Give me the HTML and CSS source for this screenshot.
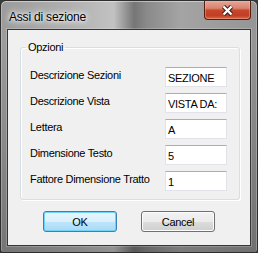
FILE: index.html
```html
<!DOCTYPE html>
<html lang="it">

<head>
  <meta charset="UTF-8">
  <title>Assi di sezione</title>
  <link rel="stylesheet" href="styles.css">
</head>

<body>
  <div class="window">
    <div class="titlebar">
      <span class="title">Assi di sezione</span>
      <button class="close">
        <svg width="13" height="11" viewBox="0 0 13 11">
          <path d="M2.5 1.5 L10.5 9.5 M10.5 1.5 L2.5 9.5" stroke="#3b1d16" stroke-width="4.4" fill="none" />
          <path d="M2.5 1.5 L10.5 9.5 M10.5 1.5 L2.5 9.5" stroke="#fff" stroke-width="2.4" fill="none" />
        </svg>
      </button>
    </div>

    <div class="client">
      <fieldset class="group">
        <legend>Opzioni</legend>
        <div class="row">
          <label>Descrizione Sezioni</label>
          <input class="field" value="SEZIONE">
        </div>
        <div class="row">
          <label>Descrizione Vista</label>
          <input class="field" value="VISTA DA:">
        </div>
        <div class="row">
          <label>Lettera</label>
          <input class="field" value="A">
        </div>
        <div class="row">
          <label>Dimensione Testo</label>
          <input class="field" value="5">
        </div>
        <div class="row">
          <label>Fattore Dimensione Tratto</label>
          <input class="field" value="1">
        </div>
      </fieldset>

      <div class="buttons">
        <button class="btn default">OK</button>
        <button class="btn">Cancel</button>
      </div>
    </div>
  </div>
</body>

</html>
```

FILE: styles.css
```css
body {
  margin: 0;
  background: #3a3a3a;
}

.window {
  width: 258px;
  height: 253px;
  box-sizing: border-box;
  padding: 0 6px 6px 6px;
  border: 1px solid #2e2e2e;
  border-radius: 6px 6px 3px 3px;
  background:
    linear-gradient(to bottom, rgba(0, 0, 0, 0) 0, rgba(0, 0, 0, 0) 40px, rgba(0, 0, 0, .25) 100%),
    linear-gradient(90deg, #9b9b9b 0%, #b3b3b3 30%, #c2c2c2 44%, #767676 52%, #8a8a8a 57%, #a4a4a4 70%, #959595 100%);
  box-shadow: inset 0 1px 0 rgba(255, 255, 255, .45), inset 1px 0 0 rgba(255, 255, 255, .25), inset -1px 0 0 rgba(255, 255, 255, .25);
  font-family: "Liberation Sans", Arial, sans-serif;
}

.titlebar {
  height: 28px;
  display: flex;
  align-items: flex-start;
  justify-content: space-between;
}

.title {
  margin: 9px 0 0 2px;
  font-family: "Liberation Sans", Arial, sans-serif;
  font-size: 12px;
  line-height: 14px;
  letter-spacing: -0.2px;
  color: #000;
  text-shadow: 0 0 8px #fff, 0 0 6px #fff, 0 0 3px rgba(255, 255, 255, .9);
}

.close {
  width: 47px;
  height: 19px;
  margin: 0;
  padding: 0;
  display: flex;
  align-items: center;
  justify-content: center;
  border: 1px solid #5a1d12;
  border-top: none;
  border-radius: 0 0 4px 4px;
  background: linear-gradient(to bottom, #e6a595 0%, #d9846f 40%, #c7472d 52%, #c23e22 80%, #d9684a 100%);
  box-shadow: inset 0 0 0 1px rgba(255, 200, 180, .35);
}

.client {
  height: 217px;
  box-sizing: border-box;
  border: 1px solid #363636;
  background: #f0f0f0;
  box-shadow: 0 0 0 1px rgba(255, 255, 255, .2);
  overflow: hidden;
}

.group {
  width: 220px;
  box-sizing: border-box;
  margin: 11px 0 0 12px;
  padding: 13px 12px 8px 9px;
  border: 1px solid #d5dfe5;
  border-radius: 3px;
  box-shadow: inset 1px 1px 0 #fff, 1px 1px 0 #fff;
}

.group legend {
  margin-left: -4px;
  padding: 0 2px;
  font-size: 11px;
  line-height: 13px;
  letter-spacing: -0.3px;
  color: #000;
}

.row {
  display: flex;
  align-items: center;
  height: 20px;
  margin-bottom: 6px;
}

.row:last-child {
  margin-bottom: 0;
}

.row label {
  flex: 1;
  margin-top: -4px;
  font-size: 11px;
  letter-spacing: -0.3px;
  color: #000;
}

.field {
  width: 62px;
  height: 20px;
  box-sizing: border-box;
  margin: 0;
  padding: 1px 2px 0 2px;
  border: 1px solid #e2e3ea;
  border-top-color: #abadb3;
  background: #fff;
  font-family: "Liberation Sans", Arial, sans-serif;
  font-size: 11px;
  letter-spacing: -0.3px;
  color: #000;
  outline: none;
}

.buttons {
  display: flex;
  justify-content: center;
  gap: 24px;
  margin-top: 11px;
}

.btn {
  width: 74px;
  height: 21px;
  margin: 0;
  padding: 0;
  border: 1px solid #707070;
  border-radius: 3px;
  background: linear-gradient(to bottom, #f2f2f2 0%, #ebebeb 50%, #dddddd 51%, #cfcfcf 100%);
  box-shadow: inset 0 0 0 1px #fcfcfc;
  font-family: "Liberation Sans", Arial, sans-serif;
  font-size: 11px;
  letter-spacing: -0.3px;
  color: #000;
}

.btn.default {
  border-color: #3c7fb1;
  background: linear-gradient(to bottom, #eaf6fd 0%, #d9f0fc 50%, #bee6fd 51%, #a7d9f5 100%);
  box-shadow: inset 0 0 0 1px #6fd3fb;
}
```
